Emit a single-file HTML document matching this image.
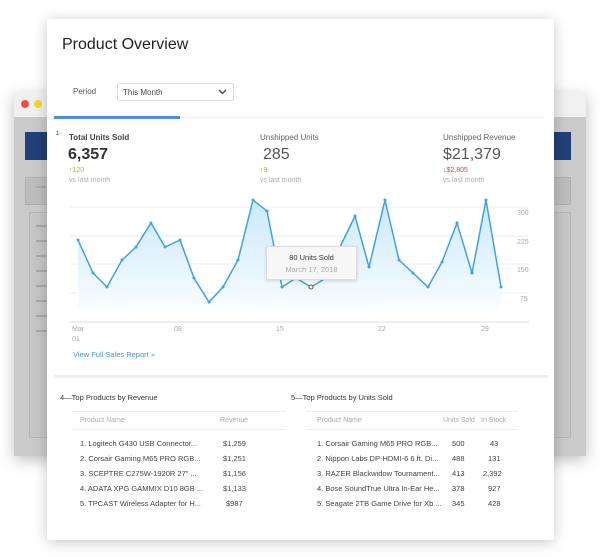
<!DOCTYPE html>
<html><head><meta charset="utf-8"><style>
*{margin:0;padding:0;box-sizing:border-box}
body{width:600px;height:557px;background:#fff;position:relative;overflow:hidden;font-family:"Liberation Sans",sans-serif;color:#333}
.a{position:absolute;white-space:nowrap}
.bg{left:14px;top:92px;width:572px;height:364px;background:#cacaca;box-shadow:0 4px 14px rgba(0,0,0,.25)}
.tb{left:14px;top:92px;width:572px;height:25px;background:#f0f0f0}
.card{left:47px;top:19px;width:507px;height:521px;background:#fff;box-shadow:0 2px 14px rgba(0,0,0,.22);border-radius:2px}
.s{font-size:8px;color:#888}
.r{font-size:7.5px;color:#444}
.h{font-size:7px;color:#aaa}
</style></head><body>
<div class="a bg"></div><div class="a tb"></div>
<div class="a" style="left:21px;top:100px;width:8px;height:8px;border-radius:50%;background:#ee4c4c"></div>
<div class="a" style="left:34px;top:100px;width:8px;height:8px;border-radius:50%;background:#f2d82a"></div>
<div class="a" style="left:25px;top:132px;width:546px;height:28px;background:#213f78"></div>
<div class="a" style="left:25px;top:177px;width:546px;height:28px;background:#bdbdbd;border:1px solid #b0b0b0"></div>
<div class="a" style="left:29px;top:212px;width:542px;height:226px;border:1px solid #b5b5b5;background:#c6c6c6"></div>
<div class="a" style="left:36px;top:186px;width:10px;height:2px;background:#aaa"></div>
<div class="a" style="left:36px;top:225px;width:12px;height:2px;background:#aaa"></div>
<div class="a" style="left:36px;top:240px;width:12px;height:2px;background:#aaa"></div>
<div class="a" style="left:36px;top:255px;width:12px;height:2px;background:#aaa"></div>
<div class="a" style="left:36px;top:270px;width:12px;height:2px;background:#aaa"></div>
<div class="a" style="left:36px;top:285px;width:12px;height:2px;background:#aaa"></div>
<div class="a" style="left:36px;top:300px;width:12px;height:2px;background:#aaa"></div>
<div class="a" style="left:36px;top:315px;width:12px;height:2px;background:#aaa"></div>
<div class="a" style="left:36px;top:330px;width:12px;height:2px;background:#aaa"></div>

<div class="a card"></div>
<div class="a" style="left:62px;top:36px;font-size:16px;color:#222">Product Overview</div>
<div class="a" style="left:73px;top:87px;font-size:8px;color:#555">Period</div>
<div class="a" style="left:117px;top:83px;width:117px;height:18px;border:1px solid #ddd;border-radius:2px;font-size:8px;color:#444;padding:4px 5px">This Month
<svg style="position:absolute;right:6px;top:5px" width="9" height="6"><path d="M1 1L4.5 4.5L8 1" stroke="#444" stroke-width="1.3" fill="none"/></svg></div>
<div class="a" style="left:54px;top:117px;width:491px;height:1px;background:#eee"></div>
<div class="a" style="left:54px;top:116px;width:126px;height:3px;background:#4a90e2"></div>

<div class="a" style="left:56px;top:131px;font-size:6px">1·</div>
<div class="a" style="left:69px;top:133px;font-size:8px;font-weight:bold;color:#444">Total Units Sold</div>
<div class="a" style="left:68px;top:146px;font-size:16px;font-weight:bold;color:#333">6,357</div>
<div class="a" style="left:69px;top:167px;font-size:7px;color:#7ed321">↑120</div>
<div class="a s" style="left:69px;top:177px;font-size:7px;color:#aaa">vs last month</div>
<div class="a" style="left:260px;top:133px;font-size:8px;color:#666">Unshipped Units</div>
<div class="a" style="left:263px;top:146px;font-size:16px;color:#555">285</div>
<div class="a" style="left:260px;top:167px;font-size:7px;color:#7ed321">↑9</div>
<div class="a" style="left:260px;top:177px;font-size:7px;color:#aaa">vs last month</div>
<div class="a" style="left:443px;top:133px;font-size:8px;color:#666">Unshipped Revenue</div>
<div class="a" style="left:443px;top:146px;font-size:16px;color:#555">$21,379</div>
<div class="a" style="left:443px;top:167px;font-size:7px;color:#e0443c">↓$2,805</div>
<div class="a" style="left:443px;top:177px;font-size:7px;color:#aaa">vs last month</div>

<svg class="a" style="left:0;top:0" width="600" height="557">
<defs><linearGradient id="g" x1="0" y1="0" x2="0" y2="1"><stop offset="0" stop-color="#cbe9fb"/><stop offset="1" stop-color="#f8fcff"/></linearGradient></defs>
<g stroke="#ececec" stroke-width="1"><line x1="70" y1="207" x2="529" y2="207"/><line x1="70" y1="236" x2="529" y2="236"/><line x1="70" y1="264" x2="529" y2="264"/><line x1="70" y1="293" x2="529" y2="293"/></g>
<line x1="70" y1="322" x2="529" y2="322" stroke="#ddd"/>
<path d="M78 240L93 273L107 287L122 260L136 247L151 223L165 247L180 240L194 278L209 302L223 287L238 260L253 200L267 211L282 287L296 278L311 287L326 278L340 247L355 216L369 267L385 200L399 260L413 273L428 287L442 262L457 223L472 273L486 200L501 287L501 308L78 308Z" fill="url(#g)"/>
<polyline points="78,240 93,273 107,287 122,260 136,247 151,223 165,247 180,240 194,278 209,302 223,287 238,260 253,200 267,211 282,287 296,278 311,287 326,278 340,247 355,216 369,267 385,200 399,260 413,273 428,287 442,262 457,223 472,273 486,200 501,287" fill="none" stroke="#3fa0ec" stroke-width="1.5"/>
<g fill="#3fa0ec"><circle cx="78" cy="240" r="1.5"/><circle cx="93" cy="273" r="1.5"/><circle cx="107" cy="287" r="1.5"/><circle cx="122" cy="260" r="1.5"/><circle cx="136" cy="247" r="1.5"/><circle cx="151" cy="223" r="1.5"/><circle cx="165" cy="247" r="1.5"/><circle cx="180" cy="240" r="1.5"/><circle cx="194" cy="278" r="1.5"/><circle cx="209" cy="302" r="1.5"/><circle cx="223" cy="287" r="1.5"/><circle cx="238" cy="260" r="1.5"/><circle cx="253" cy="200" r="1.5"/><circle cx="267" cy="211" r="1.5"/><circle cx="282" cy="287" r="1.5"/><circle cx="355" cy="216" r="1.5"/><circle cx="369" cy="267" r="1.5"/><circle cx="385" cy="200" r="1.5"/><circle cx="399" cy="260" r="1.5"/><circle cx="413" cy="273" r="1.5"/><circle cx="428" cy="287" r="1.5"/><circle cx="442" cy="262" r="1.5"/><circle cx="457" cy="223" r="1.5"/><circle cx="472" cy="273" r="1.5"/><circle cx="486" cy="200" r="1.5"/><circle cx="501" cy="287" r="1.5"/></g>
<circle cx="311" cy="287" r="2" fill="#fff" stroke="#555"/>
<g font-family="Liberation Sans" font-size="7" fill="#aaa"><text x="517" y="215">300</text><text x="517" y="244">225</text><text x="517" y="272">150</text><text x="520" y="301">75</text>
<text x="72" y="331">Mar</text><text x="72" y="341">01</text><text x="174" y="331">08</text><text x="276" y="331">15</text><text x="378" y="331">22</text><text x="481" y="331">29</text></g>
</svg>
<div class="a" style="left:266px;top:246px;width:91px;height:34px;background:#f7f7f7;border:1px solid #ddd;box-shadow:0 1px 3px rgba(0,0,0,.15);text-align:center;padding-top:6px"><div style="font-size:7.5px;color:#333">80 Units Sold</div><div style="font-size:7.5px;color:#aaa;margin-top:3px">March 17, 2018</div></div>
<div class="a" style="left:73px;top:350px;font-size:7.5px;color:#4a90e2">View Full Sales Report »</div>
<div class="a" style="left:54px;top:375px;width:494px;height:3px;background:#eee"></div>

<div class="a" style="left:60px;top:393px;font-size:7.5px;color:#333">4—Top Products by Revenue</div>
<div class="a" style="left:291px;top:393px;font-size:7.5px;color:#333">5—Top Products by Units Sold</div>
<div class="a" style="left:73px;top:411px;width:213px;height:1px;background:#eee"></div>
<div class="a" style="left:73px;top:429px;width:213px;height:1px;background:#eee"></div>
<div class="a" style="left:306px;top:411px;width:212px;height:1px;background:#eee"></div>
<div class="a" style="left:306px;top:429px;width:212px;height:1px;background:#eee"></div>
<div class="a h" style="left:80px;top:417px">Product Name</div><div class="a h" style="left:220px;top:417px">Revenue</div>
<div class="a h" style="left:317px;top:417px">Product Name</div><div class="a h" style="left:443px;top:417px">Units Sold</div><div class="a h" style="left:481px;top:417px">In Stock</div>

<div class="a r" style="left:80px;top:439px">1. Logitech G430 USB Connector...</div><div class="a r" style="left:223px;top:439px">$1,259</div>
<div class="a r" style="left:80px;top:454px">2. Corsair Gaming M65 PRO RGB...</div><div class="a r" style="left:223px;top:454px">$1,251</div>
<div class="a r" style="left:80px;top:469px">3. SCEPTRE C275W-1920R 27" ...</div><div class="a r" style="left:223px;top:469px">$1,156</div>
<div class="a r" style="left:80px;top:484px">4. ADATA XPG GAMMIX D10 8GB ...</div><div class="a r" style="left:223px;top:484px">$1,133</div>
<div class="a r" style="left:80px;top:499px">5. TPCAST Wireless Adapter for H...</div><div class="a r" style="left:226px;top:499px">$987</div>

<div class="a r" style="left:317px;top:439px">1. Corsair Gaming M65 PRO RGB...</div><div class="a r" style="left:452px;top:439px">500</div><div class="a r" style="left:490px;top:439px">43</div>
<div class="a r" style="left:317px;top:454px">2. Nippon Labs DP-HDMI-6 6 ft. Di...</div><div class="a r" style="left:452px;top:454px">488</div><div class="a r" style="left:488px;top:454px">131</div>
<div class="a r" style="left:317px;top:469px">3. RAZER Blackwidow Tournament...</div><div class="a r" style="left:452px;top:469px">413</div><div class="a r" style="left:483px;top:469px">2,392</div>
<div class="a r" style="left:317px;top:484px">4. Bose SoundTrue Ultra In-Ear He...</div><div class="a r" style="left:452px;top:484px">378</div><div class="a r" style="left:488px;top:484px">927</div>
<div class="a r" style="left:317px;top:499px">5. Seagate 2TB Game Drive for Xb ...</div><div class="a r" style="left:452px;top:499px">345</div><div class="a r" style="left:488px;top:499px">428</div>
</body></html>
